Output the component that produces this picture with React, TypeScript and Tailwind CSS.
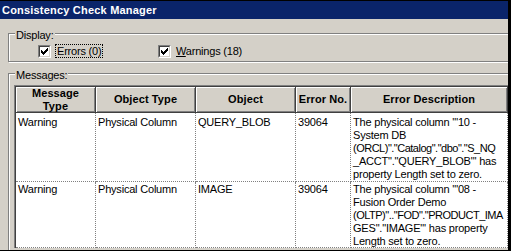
const rows = [
  {
    kind: 'Warning',
    type: 'Physical Column',
    object: 'QUERY_BLOB',
    code: '39064',
    lines: [`The physical column '"10 -`, 'System DB', `(ORCL)"."Catalog"."dbo"."S_NQ`, `_ACCT"."QUERY_BLOB"' has`, 'property Length set to zero.'],
    h: 'h-[69px] pt-[3px]',
  },
  {
    kind: 'Warning',
    type: 'Physical Column',
    object: 'IMAGE',
    code: '39064',
    lines: [`The physical column '"08 -`, 'Fusion Order Demo', `(OLTP)".."FOD"."PRODUCT_IMA`, `GES"."IMAGE"' has property`, 'Length set to zero.'],
    h: 'h-[66px] pt-[1px]',
  },
];

function CheckBox() {
  return (
    <span className="flex h-[13px] w-[13px] shrink-0 border border-t-[#808080] border-l-[#808080] border-r-white border-b-white">
      <span className="flex h-full w-full items-center justify-center border border-t-[#404040] border-l-[#404040] border-r-[#d4d0c8] border-b-[#d4d0c8] bg-white">
        <svg width="7" height="7" viewBox="0 0 7 7" shapeRendering="crispEdges">
          <rect x="6" y="0" width="1" height="1" fill="#000" />
          <rect x="5" y="1" width="2" height="1" fill="#000" />
          <rect x="0" y="2" width="1" height="1" fill="#000" />
          <rect x="4" y="2" width="3" height="1" fill="#000" />
          <rect x="0" y="3" width="2" height="1" fill="#000" />
          <rect x="3" y="3" width="3" height="1" fill="#000" />
          <rect x="0" y="4" width="5" height="1" fill="#000" />
          <rect x="1" y="5" width="3" height="1" fill="#000" />
          <rect x="2" y="6" width="1" height="1" fill="#000" />
        </svg>
      </span>
    </span>
  );
}

function GroupBox({ label, className, children }: { label: string; className: string; children?: React.ReactNode }) {
  return (
    <div className={`relative -mr-[20px] border border-[#808080] shadow-[inset_1px_1px_0_#fff,1px_1px_0_#fff] ${className}`}>
      <span className="absolute -top-[5px] left-[6px] bg-[#d4d0c8] px-[1px]">{label}</span>
      {children}
    </div>
  );
}

const headCell =
  'flex items-center justify-center text-center font-bold tracking-[0.1px] bg-[#d4d0c8] border-r border-b border-[#404040] shadow-[inset_1px_1px_0_#fff,inset_-1px_-1px_0_#808080]';
const cell = 'border-r border-b border-dotted border-[#808080] pl-[2px] whitespace-nowrap overflow-hidden';

export default function App() {
  return (
    <div className="h-[251px] w-[511px] overflow-hidden border-y border-r-[3px] border-black bg-[#d4d0c8] font-['Liberation_Sans',Arial,sans-serif] text-[11px] leading-[13px] tracking-[-0.2px] text-black">
      <div className="flex h-[18px] items-center bg-[#0a246a] pl-[2px] font-bold tracking-[0.2px] text-white">
        Consistency Check Manager
      </div>

      <div className="pl-[8px] pt-[14px]">
        <GroupBox label="Display:" className="h-[29px]">
          <div className="flex items-center pl-[29px] pt-[10px]">
            <div className="flex w-[120px] items-center">
              <CheckBox />
              <span className="ml-[4px] border border-dotted border-black px-[1px] leading-[12px]">Errors (0)</span>
            </div>
            <div className="flex items-center">
              <CheckBox />
              <span className="ml-[5px] leading-[12px]">
                <span className="underline">W</span>arnings (18)
              </span>
            </div>
          </div>
        </GroupBox>

        <GroupBox label="Messages:" className="mt-[11px] h-[200px]">
          <div className="ml-[5px] mt-[11px] border-t border-l border-[#808080]">
            <div className="border-t border-l border-[#404040] bg-white">
              <div className="grid grid-cols-[80px_100px_100px_55px_157px]">
                <div className={`${headCell} h-[26px]`}>
                  Message
                  <br />
                  Type
                </div>
                <div className={headCell}>Object Type</div>
                <div className={headCell}>Object</div>
                <div className={headCell}>Error No.</div>
                <div className={headCell}>Error Description</div>

                {rows.map((row, i) => (
                  <div key={i} className="contents">
                    <div className={`${cell} ${row.h}`}>{row.kind}</div>
                    <div className={`${cell} ${row.h}`}>{row.type}</div>
                    <div className={`${cell} ${row.h}`}>{row.object}</div>
                    <div className={`${cell} ${row.h}`}>{row.code}</div>
                    <div className={`${cell} ${row.h}`}>
                      {row.lines.map((line, j) => (
                        <div key={line} className={j === 2 ? 'tracking-[-0.5px]' : ''}>
                          {line}
                        </div>
                      ))}
                    </div>
                  </div>
                ))}
              </div>
            </div>
          </div>
        </GroupBox>
      </div>
    </div>
  );
}
